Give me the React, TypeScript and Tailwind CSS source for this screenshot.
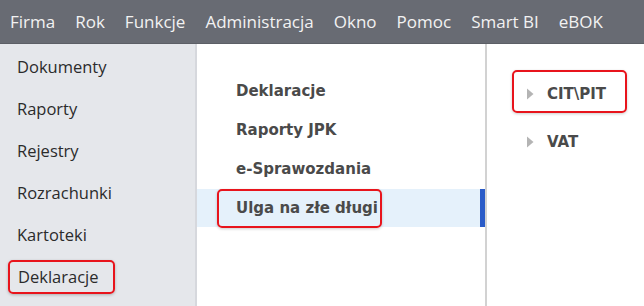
const MENU = ["Firma", "Rok", "Funkcje", "Administracja", "Okno", "Pomoc", "Smart BI", "eBOK"];
const LEFT = ["Dokumenty", "Raporty", "Rejestry", "Rozrachunki", "Kartoteki", "Deklaracje"];
const MIDDLE = ["Deklaracje", "Raporty JPK", "e-Sprawozdania", "Ulga na złe długi"];

function Arrow() {
  return (
    <svg width="8" height="12" viewBox="0 0 8 12" className="shrink-0">
      <path d="M1 0.5 L7.5 6 L1 11.5 Z" fill="#b4b4b4" />
    </svg>
  );
}

export default function App() {
  return (
    <div className="flex h-[306px] w-[644px] flex-col overflow-hidden bg-white font-['Open_Sans',sans-serif]">
      <header className="flex h-[44px] shrink-0 items-center gap-[20px] border-b border-[#5c5f66] bg-[#686b73] pl-[10px] text-[17px] text-[#f2f2f2]">
        {MENU.map((item) => (
          <span key={item}>{item}</span>
        ))}
      </header>

      <div className="flex min-h-0 flex-1">
        <aside className="w-[197px] shrink-0 border-r-2 border-[#d6d8dd] bg-[#e5e7eb] pt-[2px]">
          {LEFT.map((item) => {
            const marked = item === "Deklaracje";
            return (
              <div key={item} className="flex h-[42px] items-center">
                {marked ? (
                  <span className="ml-[8px] flex h-[34px] items-center rounded-[5px] border-2 border-[#e8141c] pl-[8px] pr-[14px] text-[16.5px] text-[#2b2b2b] shadow-[0_1px_3px_rgba(0,0,0,0.25)]">
                    {item}
                  </span>
                ) : (
                  <span className="pl-[17px] text-[16.5px] text-[#2b2b2b]">{item}</span>
                )}
              </div>
            );
          })}
        </aside>

        <section className="w-[290px] shrink-0 border-r-2 border-[#d2d2d2] pt-[28px] font-['DejaVu_Sans',sans-serif]">
          {MIDDLE.map((item) => {
            const active = item === "Ulga na złe długi";
            return (
              <div
                key={item}
                className={`flex items-center ${active ? "h-[38px] bg-[#e5f1fb]" : "h-[39px]"}`}
              >
                {active ? (
                  <>
                    <span className="ml-[20px] flex h-[39px] items-center rounded-[5px] border-2 border-[#e8141c] pl-[17px] pr-[2px] text-[15px] font-bold text-[#4a4a4a] shadow-[0_1px_3px_rgba(0,0,0,0.2)]">
                      {item}
                    </span>
                    <span className="ml-auto h-full w-[5px] bg-[#2a5bc8]" />
                  </>
                ) : (
                  <span className="pl-[39px] text-[15px] font-bold text-[#4a4a4a]">{item}</span>
                )}
              </div>
            );
          })}
        </section>

        <section className="flex-1 pt-[26px] font-['DejaVu_Sans',sans-serif]">
          <div className="ml-[25px] flex h-[43px] w-[115px] items-center gap-[13px] rounded-[5px] border-2 border-[#e8141c] pl-[12px] pt-[5px] text-[15px] font-bold text-[#4a4a4a] shadow-[0_1px_3px_rgba(0,0,0,0.2)]">
            <Arrow />
            <span>CIT\PIT</span>
          </div>
          <div className="ml-[39px] mt-[18px] flex items-center gap-[13px] text-[15px] font-bold text-[#4a4a4a]">
            <Arrow />
            <span>VAT</span>
          </div>
        </section>
      </div>
    </div>
  );
}
